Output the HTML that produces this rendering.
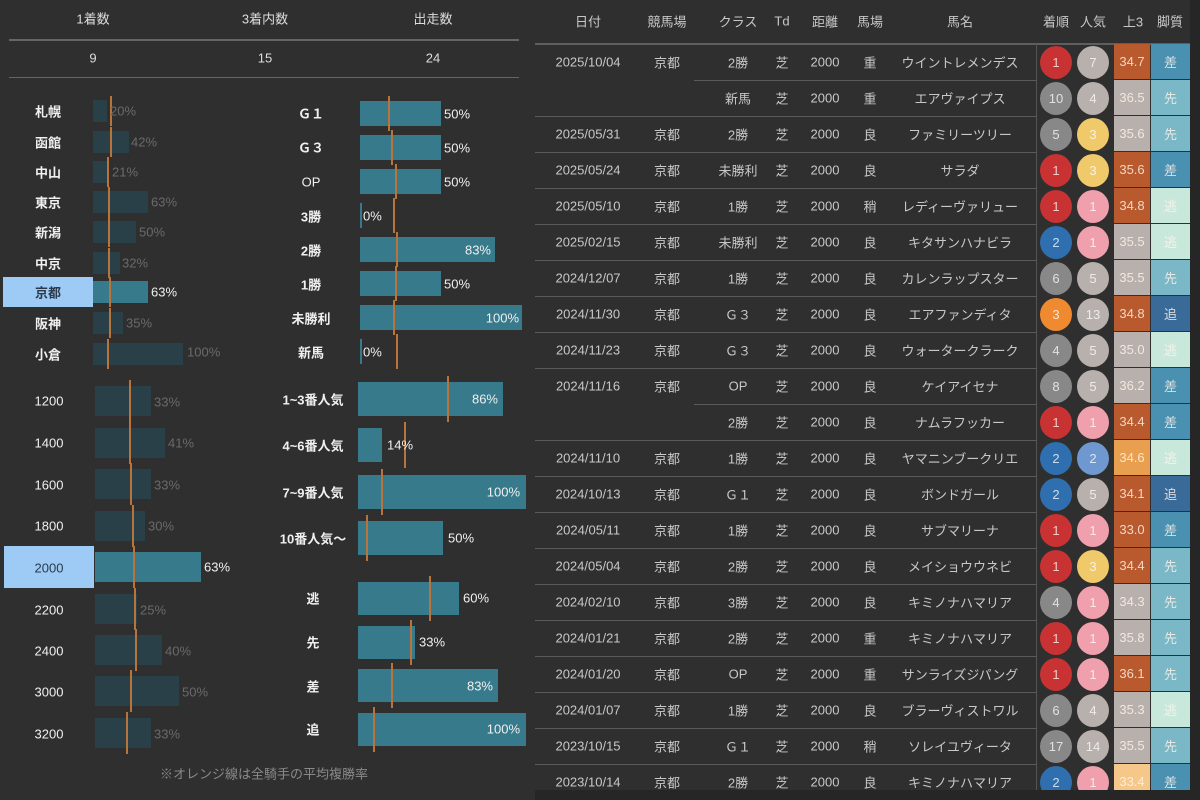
<!DOCTYPE html>
<html><head><meta charset="utf-8"><style>
*{margin:0;padding:0;box-sizing:border-box}
body{width:1200px;height:800px;background:#2f2f2f;position:relative;overflow:hidden;font-family:"Liberation Sans","Noto Sans CJK JP",sans-serif;color:#ddd;font-size:13px}
.a{position:absolute}
.t{position:absolute;transform:translate(-50%,-50%);white-space:nowrap}
.lb{position:absolute;transform:translate(-50%,-50%);font-weight:bold;color:#f0f0f0;white-space:nowrap;font-size:13px}
.bd{position:absolute;background:#2a4048}
.bb{position:absolute;background:#367a8b}
.ol{position:absolute;width:2px;background:#b8743a}
.pd{position:absolute;transform:translateY(-50%);color:#6a6a6a;font-size:13px}
.pb{position:absolute;transform:translateY(-50%);color:#f0f0f0;font-size:13px}
.pi{position:absolute;transform:translate(-100%,-50%);color:#f0f0f0;font-size:13px}
.hl{position:absolute;background:#9ecbf5}
.row{position:absolute;left:535px;width:655px;height:36px}
.row span{position:absolute;top:18px;transform:translate(-50%,-50%);white-space:nowrap;color:#c8c8c8;font-size:13px}
.ln{position:absolute;height:1px;background:#5a5a5a}
.c{position:absolute;width:32px;height:33px;border-radius:50%;top:2px;color:rgba(255,255,255,.75);font-size:13px;display:flex;align-items:center;justify-content:center}
.k{position:absolute;top:0;height:35px;color:rgba(255,245,235,.8);font-size:13px;display:flex;align-items:center;justify-content:center}
</style></head><body>
<div class="t" style="left:93px;top:18px;color:#ddd">1着数</div>
<div class="t" style="left:265px;top:18px;color:#ddd">3着内数</div>
<div class="t" style="left:433px;top:18px;color:#ddd">出走数</div>
<div class="a" style="left:9px;top:39px;width:510px;height:2px;background:#666"></div>
<div class="t" style="left:93px;top:58px">9</div>
<div class="t" style="left:265px;top:58px">15</div>
<div class="t" style="left:433px;top:58px">24</div>
<div class="a" style="left:9px;top:77px;width:510px;height:1px;background:#666"></div>

<div class="hl" style="left:3px;top:277px;width:90px;height:30px"></div>
<div class="lb" style="left:48px;top:111px">札幌</div><div class="bd" style="left:93px;top:100px;width:14px;height:22px"></div><div class="ol" style="left:110px;top:96px;height:30px"></div><div class="pd" style="left:110px;top:111px">20%</div>
<div class="lb" style="left:48px;top:142px">函館</div><div class="bd" style="left:93px;top:131px;width:36px;height:22px"></div><div class="ol" style="left:110px;top:127px;height:30px"></div><div class="pd" style="left:131px;top:142px">42%</div>
<div class="lb" style="left:48px;top:172px">中山</div><div class="bd" style="left:93px;top:161px;width:15px;height:22px"></div><div class="ol" style="left:107px;top:157px;height:30px"></div><div class="pd" style="left:112px;top:172px">21%</div>
<div class="lb" style="left:48px;top:202px">東京</div><div class="bd" style="left:93px;top:191px;width:55px;height:22px"></div><div class="ol" style="left:108px;top:187px;height:30px"></div><div class="pd" style="left:151px;top:202px">63%</div>
<div class="lb" style="left:48px;top:232px">新潟</div><div class="bd" style="left:93px;top:221px;width:43px;height:22px"></div><div class="ol" style="left:108px;top:217px;height:30px"></div><div class="pd" style="left:139px;top:232px">50%</div>
<div class="lb" style="left:48px;top:263px">中京</div><div class="bd" style="left:93px;top:252px;width:27px;height:22px"></div><div class="ol" style="left:108px;top:248px;height:30px"></div><div class="pd" style="left:122px;top:263px">32%</div>
<div class="lb" style="left:48px;top:292px;color:#2a3a4a">京都</div><div class="bb" style="left:93px;top:281px;width:55px;height:22px"></div><div class="ol" style="left:109px;top:277px;height:30px"></div><div class="pb" style="left:151px;top:292px">63%</div>
<div class="lb" style="left:48px;top:323px">阪神</div><div class="bd" style="left:93px;top:312px;width:30px;height:22px"></div><div class="ol" style="left:109px;top:308px;height:30px"></div><div class="pd" style="left:126px;top:323px">35%</div>
<div class="lb" style="left:48px;top:354px">小倉</div><div class="bd" style="left:93px;top:343px;width:90px;height:22px"></div><div class="ol" style="left:107px;top:339px;height:30px"></div><div class="pd" style="left:187px;top:352px">100%</div>

<div class="lb" style="left:311px;top:113px">Ｇ１</div><div class="bb" style="left:360px;top:101px;width:81px;height:25px"></div><div class="ol" style="left:388px;top:96px;height:35px"></div><div class="pb" style="left:444px;top:114px">50%</div>
<div class="lb" style="left:311px;top:147px">Ｇ３</div><div class="bb" style="left:360px;top:135px;width:81px;height:25px"></div><div class="ol" style="left:391px;top:130px;height:35px"></div><div class="pb" style="left:444px;top:148px">50%</div>
<div class="lb" style="left:311px;top:182px;font-weight:normal">OP</div><div class="bb" style="left:360px;top:169px;width:81px;height:25px"></div><div class="ol" style="left:395px;top:164px;height:35px"></div><div class="pb" style="left:444px;top:182px">50%</div>
<div class="lb" style="left:311px;top:216px">3勝</div><div class="bb" style="left:360px;top:203px;width:2px;height:25px"></div><div class="ol" style="left:393px;top:198px;height:35px"></div><div class="pb" style="left:363px;top:216px">0%</div>
<div class="lb" style="left:311px;top:250px">2勝</div><div class="bb" style="left:360px;top:237px;width:135px;height:25px"></div><div class="ol" style="left:396px;top:232px;height:35px"></div><div class="pi" style="left:491px;top:250px">83%</div>
<div class="lb" style="left:311px;top:284px">1勝</div><div class="bb" style="left:360px;top:271px;width:81px;height:25px"></div><div class="ol" style="left:395px;top:266px;height:35px"></div><div class="pb" style="left:444px;top:284px">50%</div>
<div class="lb" style="left:311px;top:318px">未勝利</div><div class="bb" style="left:360px;top:305px;width:162px;height:25px"></div><div class="ol" style="left:393px;top:300px;height:35px"></div><div class="pi" style="left:519px;top:318px">100%</div>
<div class="lb" style="left:311px;top:352px">新馬</div><div class="bb" style="left:360px;top:339px;width:2px;height:25px"></div><div class="ol" style="left:396px;top:334px;height:35px"></div><div class="pb" style="left:363px;top:352px">0%</div>

<div class="hl" style="left:4px;top:546px;width:90px;height:42px"></div>
<div class="lb" style="left:49px;top:401px;font-weight:normal">1200</div><div class="bd" style="left:95px;top:386px;width:56px;height:30px"></div><div class="ol" style="left:129px;top:380px;height:42px"></div><div class="pd" style="left:154px;top:402px">33%</div>
<div class="lb" style="left:49px;top:443px;font-weight:normal">1400</div><div class="bd" style="left:95px;top:428px;width:70px;height:30px"></div><div class="ol" style="left:129px;top:422px;height:42px"></div><div class="pd" style="left:168px;top:443px">41%</div>
<div class="lb" style="left:49px;top:485px;font-weight:normal">1600</div><div class="bd" style="left:95px;top:469px;width:56px;height:30px"></div><div class="ol" style="left:130px;top:463px;height:42px"></div><div class="pd" style="left:154px;top:485px">33%</div>
<div class="lb" style="left:49px;top:526px;font-weight:normal">1800</div><div class="bd" style="left:95px;top:511px;width:50px;height:30px"></div><div class="ol" style="left:132px;top:505px;height:42px"></div><div class="pd" style="left:148px;top:526px">30%</div>
<div class="lb" style="left:49px;top:568px;font-weight:normal;color:#2a3a4a">2000</div><div class="bb" style="left:95px;top:552px;width:106px;height:30px"></div><div class="ol" style="left:133px;top:546px;height:42px"></div><div class="pb" style="left:204px;top:567px">63%</div>
<div class="lb" style="left:49px;top:610px;font-weight:normal">2200</div><div class="bd" style="left:95px;top:594px;width:42px;height:30px"></div><div class="ol" style="left:134px;top:588px;height:42px"></div><div class="pd" style="left:140px;top:610px">25%</div>
<div class="lb" style="left:49px;top:651px;font-weight:normal">2400</div><div class="bd" style="left:95px;top:635px;width:67px;height:30px"></div><div class="ol" style="left:135px;top:629px;height:42px"></div><div class="pd" style="left:165px;top:651px">40%</div>
<div class="lb" style="left:49px;top:692px;font-weight:normal">3000</div><div class="bd" style="left:95px;top:676px;width:84px;height:30px"></div><div class="ol" style="left:130px;top:670px;height:42px"></div><div class="pd" style="left:182px;top:692px">50%</div>
<div class="lb" style="left:49px;top:734px;font-weight:normal">3200</div><div class="bd" style="left:95px;top:718px;width:56px;height:30px"></div><div class="ol" style="left:126px;top:712px;height:42px"></div><div class="pd" style="left:154px;top:734px">33%</div>

<div class="lb" style="left:313px;top:399px">1~3番人気</div><div class="bb" style="left:358px;top:382px;width:145px;height:34px"></div><div class="ol" style="left:447px;top:376px;height:46px"></div><div class="pi" style="left:498px;top:399px">86%</div>
<div class="lb" style="left:313px;top:445px">4~6番人気</div><div class="bb" style="left:358px;top:428px;width:24px;height:34px"></div><div class="ol" style="left:404px;top:422px;height:46px"></div><div class="pb" style="left:387px;top:445px">14%</div>
<div class="lb" style="left:313px;top:492px">7~9番人気</div><div class="bb" style="left:358px;top:475px;width:168px;height:34px"></div><div class="ol" style="left:381px;top:469px;height:46px"></div><div class="pi" style="left:520px;top:492px">100%</div>
<div class="lb" style="left:313px;top:538px">10番人気～</div><div class="bb" style="left:358px;top:521px;width:85px;height:34px"></div><div class="ol" style="left:366px;top:515px;height:46px"></div><div class="pb" style="left:448px;top:538px">50%</div>

<div class="lb" style="left:313px;top:598px">逃</div><div class="bb" style="left:358px;top:582px;width:101px;height:33px"></div><div class="ol" style="left:429px;top:576px;height:45px"></div><div class="pb" style="left:463px;top:598px">60%</div>
<div class="lb" style="left:313px;top:642px">先</div><div class="bb" style="left:358px;top:626px;width:57px;height:33px"></div><div class="ol" style="left:410px;top:620px;height:45px"></div><div class="pb" style="left:419px;top:642px">33%</div>
<div class="lb" style="left:313px;top:686px">差</div><div class="bb" style="left:358px;top:669px;width:140px;height:33px"></div><div class="ol" style="left:391px;top:663px;height:45px"></div><div class="pi" style="left:493px;top:686px">83%</div>
<div class="lb" style="left:313px;top:729px">追</div><div class="bb" style="left:358px;top:713px;width:168px;height:33px"></div><div class="ol" style="left:373px;top:707px;height:45px"></div><div class="pi" style="left:520px;top:729px">100%</div>

<div class="t" style="left:264px;top:773px;color:#8a8a8a;font-size:13px">※オレンジ線は全騎手の平均複勝率</div>

<div class="row" style="top:1px;height:40px">
<span style="left:53px;top:20px">日付</span><span style="left:132px;top:20px">競馬場</span><span style="left:203px;top:20px">クラス</span><span style="left:247px;top:20px">Td</span><span style="left:290px;top:20px">距離</span><span style="left:335px;top:20px">馬場</span><span style="left:425px;top:20px">馬名</span><span style="left:521px;top:20px">着順</span><span style="left:558px;top:20px">人気</span><span style="left:598px;top:20px">上3</span><span style="left:635px;top:20px">脚質</span>
</div>
<div class="ln" style="left:535px;top:43px;width:655px;height:2px;background:#5e5e5e"></div>
<div class="a" style="left:1036px;top:44px;width:1px;height:746px;background:#555"></div>
<div class="a" style="left:1190px;top:0;width:10px;height:800px;background:#262626"></div>
<div class="a" style="left:535px;top:790px;width:665px;height:10px;background:#262626"></div>

<div class="a" style="left:0;top:0;width:1190px;height:790px;overflow:hidden">
<div class="row" style="top:44px"><span style="left:53px">2025/10/04</span><span style="left:132px">京都</span><span style="left:203px">2勝</span><span style="left:247px">芝</span><span style="left:290px">2000</span><span style="left:335px">重</span><span style="left:425px">ウイントレメンデス</span><div class="c" style="left:505px;background:#c83232">1</div><div class="c" style="left:542px;background:#b8b0ad">7</div><div class="k" style="left:579px;width:36px;background:#b85a2e">34.7</div><div class="k" style="left:616px;width:39px;background:#4a90b0">差</div></div>
<div class="ln" style="left:694px;top:80px;width:343px"></div>
<div class="row" style="top:80px"><span style="left:203px">新馬</span><span style="left:247px">芝</span><span style="left:290px">2000</span><span style="left:335px">重</span><span style="left:425px">エアヴァイプス</span><div class="c" style="left:505px;background:#888">10</div><div class="c" style="left:542px;background:#b8b0ad">4</div><div class="k" style="left:579px;width:36px;background:#b8b0ad">36.5</div><div class="k" style="left:616px;width:39px;background:#7ab8c8">先</div></div>
<div class="ln" style="left:535px;top:116px;width:502px"></div>
<div class="row" style="top:116px"><span style="left:53px">2025/05/31</span><span style="left:132px">京都</span><span style="left:203px">2勝</span><span style="left:247px">芝</span><span style="left:290px">2000</span><span style="left:335px">良</span><span style="left:425px">ファミリーツリー</span><div class="c" style="left:505px;background:#888">5</div><div class="c" style="left:542px;background:#f0c96a">3</div><div class="k" style="left:579px;width:36px;background:#b8b0ad">35.6</div><div class="k" style="left:616px;width:39px;background:#7ab8c8">先</div></div>
<div class="ln" style="left:535px;top:152px;width:502px"></div>
<div class="row" style="top:152px"><span style="left:53px">2025/05/24</span><span style="left:132px">京都</span><span style="left:203px">未勝利</span><span style="left:247px">芝</span><span style="left:290px">2000</span><span style="left:335px">良</span><span style="left:425px">サラダ</span><div class="c" style="left:505px;background:#c83232">1</div><div class="c" style="left:542px;background:#f0c96a">3</div><div class="k" style="left:579px;width:36px;background:#b85a2e">35.6</div><div class="k" style="left:616px;width:39px;background:#4a90b0">差</div></div>
<div class="ln" style="left:535px;top:188px;width:502px"></div>
<div class="row" style="top:188px"><span style="left:53px">2025/05/10</span><span style="left:132px">京都</span><span style="left:203px">1勝</span><span style="left:247px">芝</span><span style="left:290px">2000</span><span style="left:335px">稍</span><span style="left:425px">レディーヴァリュー</span><div class="c" style="left:505px;background:#c83232">1</div><div class="c" style="left:542px;background:#f0a0ac">1</div><div class="k" style="left:579px;width:36px;background:#b85a2e">34.8</div><div class="k" style="left:616px;width:39px;background:#c8e8dc">逃</div></div>
<div class="ln" style="left:535px;top:224px;width:502px"></div>
<div class="row" style="top:224px"><span style="left:53px">2025/02/15</span><span style="left:132px">京都</span><span style="left:203px">未勝利</span><span style="left:247px">芝</span><span style="left:290px">2000</span><span style="left:335px">良</span><span style="left:425px">キタサンハナビラ</span><div class="c" style="left:505px;background:#2f6fb0">2</div><div class="c" style="left:542px;background:#f0a0ac">1</div><div class="k" style="left:579px;width:36px;background:#b8b0ad">35.5</div><div class="k" style="left:616px;width:39px;background:#c8e8dc">逃</div></div>
<div class="ln" style="left:535px;top:260px;width:502px"></div>
<div class="row" style="top:260px"><span style="left:53px">2024/12/07</span><span style="left:132px">京都</span><span style="left:203px">1勝</span><span style="left:247px">芝</span><span style="left:290px">2000</span><span style="left:335px">良</span><span style="left:425px">カレンラップスター</span><div class="c" style="left:505px;background:#888">6</div><div class="c" style="left:542px;background:#b8b0ad">5</div><div class="k" style="left:579px;width:36px;background:#b8b0ad">35.5</div><div class="k" style="left:616px;width:39px;background:#7ab8c8">先</div></div>
<div class="ln" style="left:535px;top:296px;width:502px"></div>
<div class="row" style="top:296px"><span style="left:53px">2024/11/30</span><span style="left:132px">京都</span><span style="left:203px">Ｇ３</span><span style="left:247px">芝</span><span style="left:290px">2000</span><span style="left:335px">良</span><span style="left:425px">エアファンディタ</span><div class="c" style="left:505px;background:#f08a30">3</div><div class="c" style="left:542px;background:#b8b0ad">13</div><div class="k" style="left:579px;width:36px;background:#b85a2e">34.8</div><div class="k" style="left:616px;width:39px;background:#3a6a98">追</div></div>
<div class="ln" style="left:535px;top:332px;width:502px"></div>
<div class="row" style="top:332px"><span style="left:53px">2024/11/23</span><span style="left:132px">京都</span><span style="left:203px">Ｇ３</span><span style="left:247px">芝</span><span style="left:290px">2000</span><span style="left:335px">良</span><span style="left:425px">ウォータークラーク</span><div class="c" style="left:505px;background:#888">4</div><div class="c" style="left:542px;background:#b8b0ad">5</div><div class="k" style="left:579px;width:36px;background:#b8b0ad">35.0</div><div class="k" style="left:616px;width:39px;background:#c8e8dc">逃</div></div>
<div class="ln" style="left:535px;top:368px;width:502px"></div>
<div class="row" style="top:368px"><span style="left:53px">2024/11/16</span><span style="left:132px">京都</span><span style="left:203px">OP</span><span style="left:247px">芝</span><span style="left:290px">2000</span><span style="left:335px">良</span><span style="left:425px">ケイアイセナ</span><div class="c" style="left:505px;background:#888">8</div><div class="c" style="left:542px;background:#b8b0ad">5</div><div class="k" style="left:579px;width:36px;background:#b8b0ad">36.2</div><div class="k" style="left:616px;width:39px;background:#4a90b0">差</div></div>
<div class="ln" style="left:694px;top:404px;width:343px"></div>
<div class="row" style="top:404px"><span style="left:203px">2勝</span><span style="left:247px">芝</span><span style="left:290px">2000</span><span style="left:335px">良</span><span style="left:425px">ナムラフッカー</span><div class="c" style="left:505px;background:#c83232">1</div><div class="c" style="left:542px;background:#f0a0ac">1</div><div class="k" style="left:579px;width:36px;background:#b85a2e">34.4</div><div class="k" style="left:616px;width:39px;background:#4a90b0">差</div></div>
<div class="ln" style="left:535px;top:440px;width:502px"></div>
<div class="row" style="top:440px"><span style="left:53px">2024/11/10</span><span style="left:132px">京都</span><span style="left:203px">1勝</span><span style="left:247px">芝</span><span style="left:290px">2000</span><span style="left:335px">良</span><span style="left:425px">ヤマニンブークリエ</span><div class="c" style="left:505px;background:#2f6fb0">2</div><div class="c" style="left:542px;background:#7098d0">2</div><div class="k" style="left:579px;width:36px;background:#e8a050">34.6</div><div class="k" style="left:616px;width:39px;background:#c8e8dc">逃</div></div>
<div class="ln" style="left:535px;top:476px;width:502px"></div>
<div class="row" style="top:476px"><span style="left:53px">2024/10/13</span><span style="left:132px">京都</span><span style="left:203px">Ｇ１</span><span style="left:247px">芝</span><span style="left:290px">2000</span><span style="left:335px">良</span><span style="left:425px">ボンドガール</span><div class="c" style="left:505px;background:#2f6fb0">2</div><div class="c" style="left:542px;background:#b8b0ad">5</div><div class="k" style="left:579px;width:36px;background:#b85a2e">34.1</div><div class="k" style="left:616px;width:39px;background:#3a6a98">追</div></div>
<div class="ln" style="left:535px;top:512px;width:502px"></div>
<div class="row" style="top:512px"><span style="left:53px">2024/05/11</span><span style="left:132px">京都</span><span style="left:203px">1勝</span><span style="left:247px">芝</span><span style="left:290px">2000</span><span style="left:335px">良</span><span style="left:425px">サブマリーナ</span><div class="c" style="left:505px;background:#c83232">1</div><div class="c" style="left:542px;background:#f0a0ac">1</div><div class="k" style="left:579px;width:36px;background:#b85a2e">33.0</div><div class="k" style="left:616px;width:39px;background:#4a90b0">差</div></div>
<div class="ln" style="left:535px;top:548px;width:502px"></div>
<div class="row" style="top:548px"><span style="left:53px">2024/05/04</span><span style="left:132px">京都</span><span style="left:203px">2勝</span><span style="left:247px">芝</span><span style="left:290px">2000</span><span style="left:335px">良</span><span style="left:425px">メイショウウネビ</span><div class="c" style="left:505px;background:#c83232">1</div><div class="c" style="left:542px;background:#f0c96a">3</div><div class="k" style="left:579px;width:36px;background:#b85a2e">34.4</div><div class="k" style="left:616px;width:39px;background:#7ab8c8">先</div></div>
<div class="ln" style="left:535px;top:584px;width:502px"></div>
<div class="row" style="top:584px"><span style="left:53px">2024/02/10</span><span style="left:132px">京都</span><span style="left:203px">3勝</span><span style="left:247px">芝</span><span style="left:290px">2000</span><span style="left:335px">良</span><span style="left:425px">キミノナハマリア</span><div class="c" style="left:505px;background:#888">4</div><div class="c" style="left:542px;background:#f0a0ac">1</div><div class="k" style="left:579px;width:36px;background:#b8b0ad">34.3</div><div class="k" style="left:616px;width:39px;background:#7ab8c8">先</div></div>
<div class="ln" style="left:535px;top:620px;width:502px"></div>
<div class="row" style="top:620px"><span style="left:53px">2024/01/21</span><span style="left:132px">京都</span><span style="left:203px">2勝</span><span style="left:247px">芝</span><span style="left:290px">2000</span><span style="left:335px">重</span><span style="left:425px">キミノナハマリア</span><div class="c" style="left:505px;background:#c83232">1</div><div class="c" style="left:542px;background:#f0a0ac">1</div><div class="k" style="left:579px;width:36px;background:#b8b0ad">35.8</div><div class="k" style="left:616px;width:39px;background:#7ab8c8">先</div></div>
<div class="ln" style="left:535px;top:656px;width:502px"></div>
<div class="row" style="top:656px"><span style="left:53px">2024/01/20</span><span style="left:132px">京都</span><span style="left:203px">OP</span><span style="left:247px">芝</span><span style="left:290px">2000</span><span style="left:335px">重</span><span style="left:425px">サンライズジパング</span><div class="c" style="left:505px;background:#c83232">1</div><div class="c" style="left:542px;background:#f0a0ac">1</div><div class="k" style="left:579px;width:36px;background:#b85a2e">36.1</div><div class="k" style="left:616px;width:39px;background:#7ab8c8">先</div></div>
<div class="ln" style="left:535px;top:692px;width:502px"></div>
<div class="row" style="top:692px"><span style="left:53px">2024/01/07</span><span style="left:132px">京都</span><span style="left:203px">1勝</span><span style="left:247px">芝</span><span style="left:290px">2000</span><span style="left:335px">良</span><span style="left:425px">ブラーヴィストワル</span><div class="c" style="left:505px;background:#888">6</div><div class="c" style="left:542px;background:#b8b0ad">4</div><div class="k" style="left:579px;width:36px;background:#b8b0ad">35.3</div><div class="k" style="left:616px;width:39px;background:#c8e8dc">逃</div></div>
<div class="ln" style="left:535px;top:728px;width:502px"></div>
<div class="row" style="top:728px"><span style="left:53px">2023/10/15</span><span style="left:132px">京都</span><span style="left:203px">Ｇ１</span><span style="left:247px">芝</span><span style="left:290px">2000</span><span style="left:335px">稍</span><span style="left:425px">ソレイユヴィータ</span><div class="c" style="left:505px;background:#888">17</div><div class="c" style="left:542px;background:#b8b0ad">14</div><div class="k" style="left:579px;width:36px;background:#b8b0ad">35.5</div><div class="k" style="left:616px;width:39px;background:#7ab8c8">先</div></div>
<div class="ln" style="left:535px;top:764px;width:502px"></div>
<div class="row" style="top:764px"><span style="left:53px">2023/10/14</span><span style="left:132px">京都</span><span style="left:203px">2勝</span><span style="left:247px">芝</span><span style="left:290px">2000</span><span style="left:335px">良</span><span style="left:425px">キミノナハマリア</span><div class="c" style="left:505px;background:#2f6fb0">2</div><div class="c" style="left:542px;background:#f0a0ac">1</div><div class="k" style="left:579px;width:36px;background:#f5c88a">33.4</div><div class="k" style="left:616px;width:39px;background:#4a90b0">差</div></div>
</div>
</body></html>
